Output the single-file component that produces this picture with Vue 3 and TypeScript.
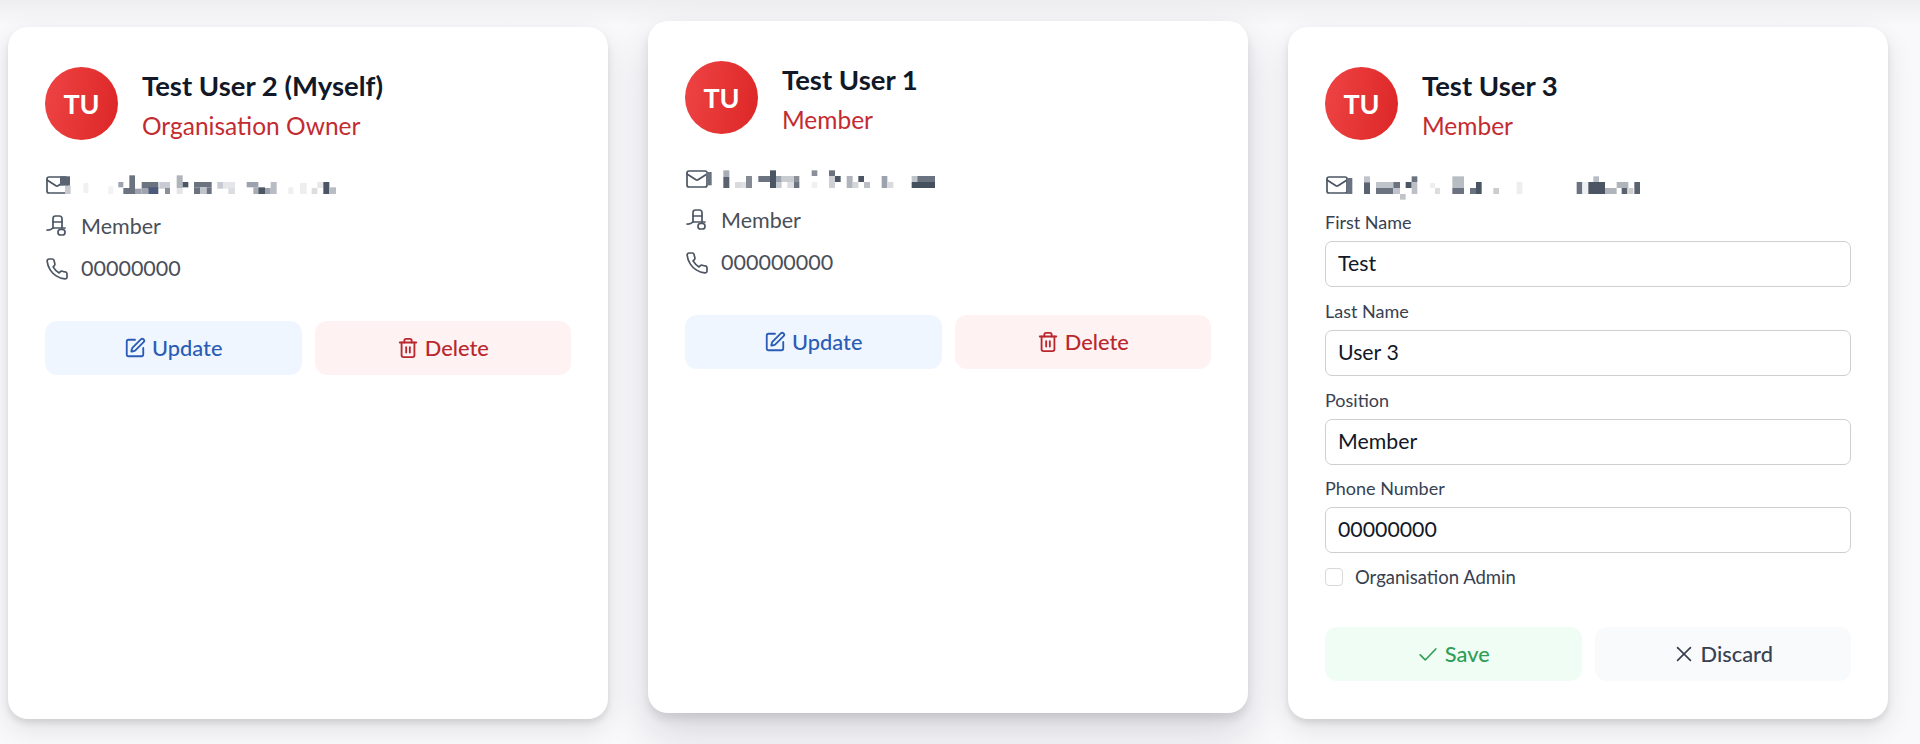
<script setup lang="ts">
type Block = [number, number, number, number, string]

interface Profile {
  name: string
  role: string
  phone: string
  editing: boolean
  raised: boolean
  mosaicWidth: number
  mosaicLeft: number
  blocks: Block[]
}

const profiles: Profile[] = [
  {
    name: 'Test User 2 (Myself)',
    role: 'Organisation Owner',
    phone: '00000000',
    editing: false,
    raised: false,
    mosaicWidth: 300,
    mosaicLeft: -5,
    blocks: [
      [60, 25, 30, 28, '#5b6472'], [75, 53, 17, 25, '#c6c9d0'], [130, 45, 15, 30, '#f0f1f3'], [205, 55, 15, 23, '#f2f2f4'],
      [235, 42, 15, 16, '#9ca3af'], [250, 60, 20, 18, '#6b7280'], [268, 22, 17, 56, '#6b7280'], [285, 62, 20, 16, '#9ca3af'],
      [305, 42, 50, 20, '#6b7280'], [305, 60, 20, 18, '#a0a5b0'], [325, 58, 30, 20, '#4b5a7a'], [358, 42, 32, 20, '#c8ccd2'],
      [375, 60, 15, 18, '#8b8f98'], [410, 22, 18, 38, '#b0b4bb'], [428, 42, 17, 16, '#4b5563'], [410, 60, 18, 18, '#e5e5e8'],
      [462, 42, 53, 16, '#6b7280'], [462, 58, 18, 20, '#6b7280'], [480, 58, 20, 20, '#c0c4cb'], [500, 58, 15, 20, '#6b7280'],
      [532, 42, 18, 20, '#c8cbd0'], [550, 42, 35, 20, '#e5e6e9'], [565, 60, 20, 18, '#dcdde0'], [620, 42, 35, 16, '#9ca3af'],
      [640, 58, 15, 20, '#a8adb5'], [655, 58, 20, 20, '#4b5563'], [675, 60, 17, 18, '#9ca3af'], [692, 42, 18, 36, '#b8bcc3'],
      [745, 58, 15, 20, '#eeeff1'], [780, 45, 20, 33, '#eeeeee'], [815, 60, 17, 18, '#dddddd'], [832, 42, 18, 18, '#e8e8ea'],
      [850, 42, 18, 36, '#4b5563'], [868, 58, 20, 20, '#b8bcc3'],
    ],
  },
  {
    name: 'Test User 1',
    role: 'Member',
    phone: '000000000',
    editing: false,
    raised: true,
    mosaicWidth: 270,
    mosaicLeft: -5,
    blocks: [
      [78, 30, 17, 40, '#6b7280'], [130, 25, 18, 20, '#a8adb5'], [130, 45, 18, 33, '#5a6270'], [165, 60, 18, 18, '#d8dade'],
      [183, 60, 17, 18, '#e0e0e4'], [198, 42, 18, 36, '#858a93'], [235, 42, 35, 18, '#6b7280'], [270, 25, 18, 53, '#4b5563'],
      [288, 42, 17, 18, '#9ca3af'], [288, 60, 17, 18, '#c8cbd0'], [305, 42, 37, 18, '#c8cbd0'], [322, 60, 20, 18, '#dddde2'],
      [342, 42, 16, 18, '#8b8f98'], [342, 60, 16, 18, '#6b7280'], [395, 25, 17, 17, '#8b8f98'], [395, 60, 17, 18, '#f0f0f2'],
      [447, 25, 18, 17, '#6b7280'], [465, 42, 17, 18, '#4b5563'], [447, 42, 18, 36, '#ced0d5'], [500, 42, 18, 36, '#b0b4bb'],
      [518, 60, 17, 18, '#d4d6da'], [535, 42, 17, 18, '#4b5563'], [552, 60, 18, 18, '#bcc0c6'], [605, 42, 17, 36, '#9ca3af'],
      [622, 60, 18, 18, '#d8dade'], [695, 42, 17, 18, '#bfc4cb'], [712, 42, 53, 18, '#6b7280'], [695, 60, 70, 18, '#45505e'],
    ],
  },
  {
    name: 'Test User 3',
    role: 'Member',
    phone: '00000000',
    editing: true,
    raised: false,
    mosaicWidth: 340,
    mosaicLeft: -5,
    blocks: [
      [80, 30, 17, 48, '#6b7280'], [132, 25, 18, 18, '#c0c4ca'], [132, 43, 18, 35, '#5a6270'], [168, 42, 52, 18, '#bfc3ca'],
      [168, 60, 52, 18, '#6b7280'], [220, 42, 20, 18, '#6b7280'], [220, 60, 20, 18, '#c0c4ca'], [240, 78, 17, 17, '#c0c4ca'],
      [257, 42, 18, 18, '#4b5563'], [275, 25, 17, 17, '#6b7280'], [275, 42, 17, 36, '#bcc0c6'], [330, 45, 15, 15, '#eeeeee'],
      [345, 60, 15, 18, '#dddddd'], [397, 25, 35, 35, '#b8bcc3'], [397, 60, 35, 18, '#6b7280'], [450, 60, 18, 18, '#6b7280'],
      [468, 42, 17, 36, '#4b5563'], [520, 60, 17, 18, '#cccccc'], [590, 42, 17, 36, '#eeeeee'], [770, 42, 17, 36, '#6b7280'],
      [787, 42, 18, 36, '#eef0f2'], [805, 42, 50, 36, '#4b5563'], [820, 25, 17, 17, '#b8bcc3'], [855, 60, 35, 18, '#b0b4bb'],
      [890, 42, 35, 18, '#b0b4bb'], [905, 60, 17, 18, '#5a6270'], [925, 60, 15, 18, '#cccccc'], [943, 42, 17, 36, '#5a6270'],
    ],
  },
]

const fields = [
  { label: 'First Name', value: 'Test' },
  { label: 'Last Name', value: 'User 3' },
  { label: 'Position', value: 'Member' },
  { label: 'Phone Number', value: '00000000' },
]
</script>

<template>
  <main class="page">
    <section class="grid">
      <article v-for="p in profiles" :key="p.name" class="card" :class="{ raised: p.raised }">
        <header class="head">
          <div class="avatar">TU</div>
          <div class="titles">
            <h2 class="name">{{ p.name }}</h2>
            <p class="role">{{ p.role }}</p>
          </div>
        </header>

        <div class="row">
          <svg class="ico" viewBox="0 0 24 24">
            <rect x="2" y="4" width="20" height="16" rx="2" />
            <path d="m22 7-8.97 5.7a1.94 1.94 0 0 1-2.06 0L2 7" />
          </svg>
          <svg
            class="mosaic"
            :width="p.mosaicWidth"
            height="34"
            :viewBox="`0 0 ${p.mosaicWidth * 3} 102`"
            :style="{ left: p.mosaicLeft + 'px' }"
          >
            <rect
              v-for="(b, i) in p.blocks"
              :key="i"
              :x="b[0]"
              :y="b[1]"
              :width="b[2]"
              :height="b[3]"
              :fill="b[4]"
            />
          </svg>
        </div>

        <template v-if="!p.editing">
          <div class="row">
            <svg class="ico" viewBox="0 0 24 24">
              <path d="M8 13V3.500A2.500 2.500 0 0 1 10.500 1h4A2.500 2.500 0 0 1 17 3.500V13" />
              <path d="M8 7h9" />
              <path d="M2 15c2.500.3 4.500-.5 6-2h12" />
              <rect x="13" y="14.500" width="7" height="5.500" rx="2.500" />
            </svg>
            <span class="txt">Member</span>
          </div>
          <div class="row">
            <svg class="ico" viewBox="0 0 24 24">
              <path d="M22 16.920v3a2 2 0 0 1-2.180 2 19.790 19.790 0 0 1-8.630-3.070 19.500 19.500 0 0 1-6-6 19.790 19.790 0 0 1-3.070-8.670A2 2 0 0 1 4.110 2h3a2 2 0 0 1 2 1.720 12.840 12.840 0 0 0 .7 2.810 2 2 0 0 1-.45 2.110L8.090 9.910a16 16 0 0 0 6 6l1.270-1.270a2 2 0 0 1 2.110-.45 12.840 12.840 0 0 0 2.810.7A2 2 0 0 1 22 16.92z" />
            </svg>
            <span class="txt">{{ p.phone }}</span>
          </div>
          <div class="actions">
            <button class="btn blue" type="button">
              <svg class="btn-ico" viewBox="0 0 24 24">
                <path d="M12 3H5a2 2 0 0 0-2 2v14a2 2 0 0 0 2 2h14a2 2 0 0 0 2-2v-7" />
                <path d="M18.375 2.625a1 1 0 0 1 3 3l-9.013 9.014a2 2 0 0 1-.853.505l-2.873.84a.5.5 0 0 1-.62-.62l.84-2.873a2 2 0 0 1 .506-.852z" />
              </svg>
              <span class="btn-txt">Update</span>
            </button>
            <button class="btn red" type="button">
              <svg class="btn-ico" viewBox="0 0 24 24">
                <path d="M3 6h18" />
                <path d="M19 6v14c0 1-1 2-2 2H7c-1 0-2-1-2-2V6" />
                <path d="M8 6V4c0-1 1-2 2-2h4c1 0 2 1 2 2v2" />
                <path d="M10 11v6" />
                <path d="M14 11v6" />
              </svg>
              <span class="btn-txt">Delete</span>
            </button>
          </div>
        </template>

        <form v-else class="form" @submit.prevent>
          <label v-for="f in fields" :key="f.label" class="field">
            <span class="field-label">{{ f.label }}</span>
            <input class="input" type="text" :value="f.value" />
          </label>
          <label class="check">
            <span class="box"></span>
            <span>Organisation Admin</span>
          </label>
          <div class="actions form-actions">
            <button class="btn green" type="button">
              <svg class="btn-ico thin" viewBox="0 0 24 24">
                <path d="M3.500 13 9 18.500 20.500 6.500" />
              </svg>
              <span class="btn-txt">Save</span>
            </button>
            <button class="btn gray" type="button">
              <svg class="btn-ico thin" viewBox="0 0 24 24">
                <path d="M5 5l14 14" />
                <path d="M19 5 5 19" />
              </svg>
              <span class="btn-txt">Discard</span>
            </button>
          </div>
        </form>
      </article>
    </section>
  </main>
</template>

<style scoped>
.page {
  height: 744px;
  overflow: hidden;
  box-sizing: border-box;
  padding: 27px 32px 0 8px;
  background: linear-gradient(#eeeef0 0, #f9f9fb 26px);
  font-family: Lato, "Liberation Sans", sans-serif;
}
.grid {
  display: grid;
  grid-template-columns: repeat(3, 600px);
  column-gap: 40px;
}
.card {
  box-sizing: border-box;
  height: 692px;
  padding: 40px 37px 38px;
  background: #fff;
  border-radius: 20px;
  box-shadow: 0 4px 6px rgba(0, 0, 0, 0.1), 0 10px 28px rgba(20, 20, 40, 0.1);
}
.raised {
  transform: translateY(-6px);
  box-shadow: 0 6px 10px rgba(0, 0, 0, 0.1), 0 20px 44px rgba(20, 20, 50, 0.15);
}
.head {
  display: flex;
  gap: 24px;
  margin-bottom: 31px;
}
.avatar {
  flex: none;
  display: flex;
  align-items: center;
  justify-content: center;
  width: 73px;
  height: 73px;
  border-radius: 50%;
  background: linear-gradient(100deg, #ef4444, #dc2626);
  color: #fff;
  font-size: 27px;
  font-weight: 700;
}
.titles {
  padding-top: 3px;
}
.name {
  margin: 0;
  font-size: 27.500px;
  line-height: 32px;
  font-weight: 700;
  color: #111827;
}
.role {
  margin: 8px 0 0;
  font-size: 24.500px;
  line-height: 32px;
  color: #c42b30;
}
.row {
  position: relative;
  display: flex;
  align-items: center;
  gap: 12px;
  height: 24px;
  margin-bottom: 18px;
  font-size: 21.500px;
  color: #4b4f58;
}
.txt {
  padding-bottom: 3px;
}
.ico {
  flex: none;
  width: 24px;
  height: 24px;
  fill: none;
  stroke: #4b5563;
  stroke-width: 1.700;
  stroke-linecap: round;
  stroke-linejoin: round;
}
.mosaic {
  position: absolute;
  top: -5px;
  filter: blur(0.7px);
}
.actions {
  display: grid;
  grid-template-columns: 1fr 1fr;
  column-gap: 13px;
  margin-top: 40px;
}
.btn {
  display: flex;
  align-items: center;
  justify-content: center;
  gap: 6px;
  height: 54px;
  padding: 0;
  border: 0;
  border-radius: 12px;
  font-family: inherit;
  font-size: 21.800px;
  font-weight: 500;
}
.btn-txt {
  padding-bottom: 2px;
}
.btn-ico {
  flex: none;
  width: 22px;
  height: 22px;
  fill: none;
  stroke: currentColor;
  stroke-width: 2;
  stroke-linecap: round;
  stroke-linejoin: round;
}
.btn-ico.thin {
  stroke-width: 1.800;
}
.blue { background: #eff6ff; color: #2b5cb5; }
.red { background: #fef2f2; color: #b9282e; }
.green { background: #f0fdf4; color: #2f9e57; }
.gray { background: #f9fafb; color: #374151; }
.form {
  margin-top: -4px;
}
.field {
  display: block;
  margin-bottom: 12.800px;
}
.field-label {
  display: block;
  margin-bottom: 8px;
  font-size: 18px;
  line-height: 22px;
  color: #374151;
}
.input {
  display: block;
  box-sizing: border-box;
  width: 100%;
  height: 46px;
  padding: 0 12px 2px;
  border: 1.500px solid #cfcfcf;
  border-radius: 7px;
  background: #fff;
  font-family: inherit;
  font-size: 21.300px;
  color: #111827;
  outline: none;
}
.check {
  display: flex;
  align-items: center;
  gap: 12px;
  margin-top: 15px;
  height: 18px;
  font-size: 18.500px;
  color: #374151;
}
.box {
  flex: none;
  box-sizing: border-box;
  width: 18px;
  height: 18px;
  border: 1.500px solid #d8d8da;
  border-radius: 4px;
}
.form-actions {
  margin-top: 41px;
}
</style>

<style>
html, body {
  margin: 0;
  background: #f9f9fb;
}
</style>
